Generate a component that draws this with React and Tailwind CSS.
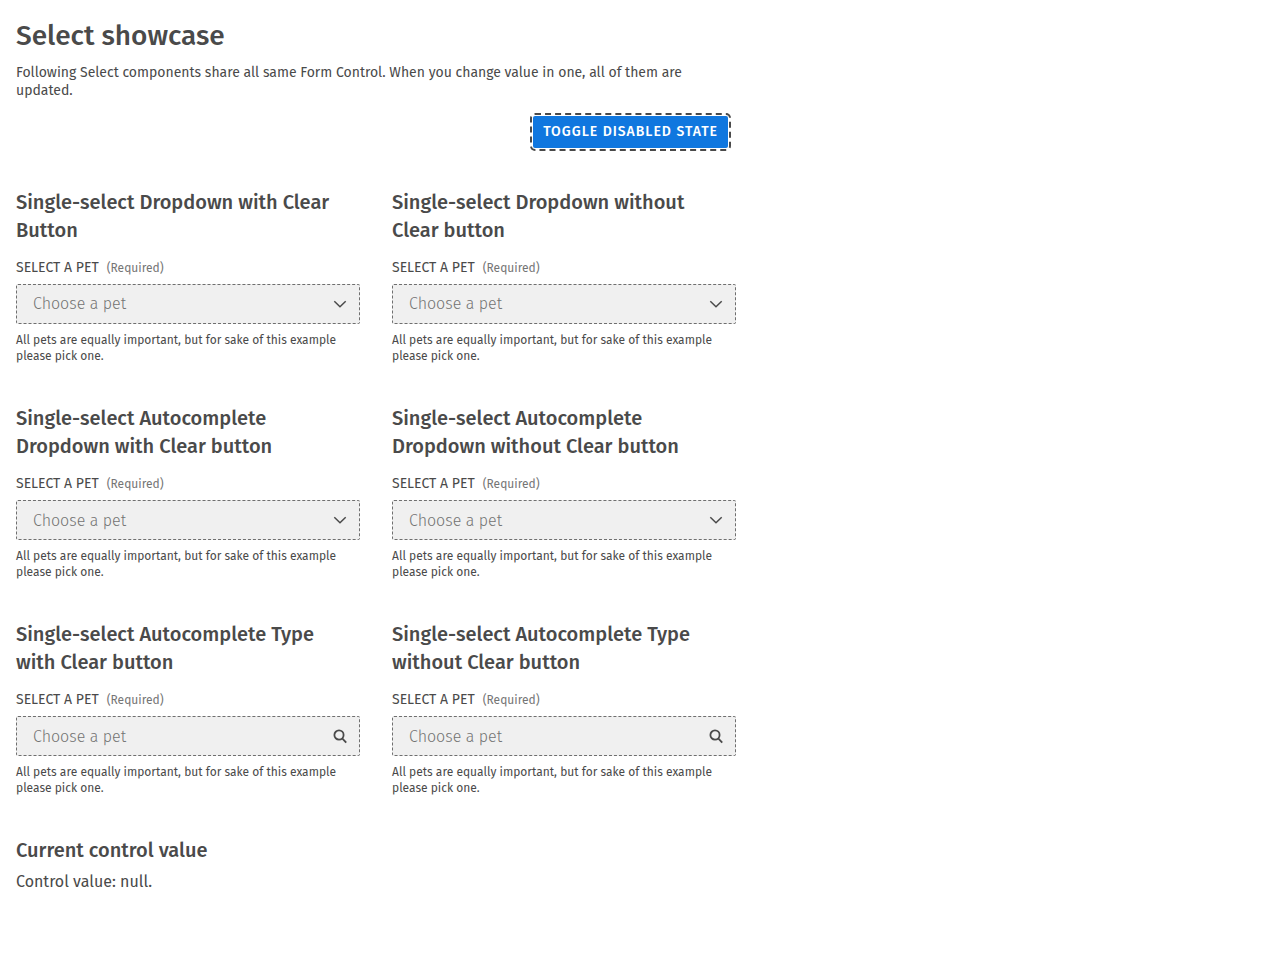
import { useId, useState } from "react";

const PETS = ["Dog", "Cat", "Hamster", "Parrot", "Spider", "Goldfish"];

const FIELDS = [
  { title: "Single-select Dropdown with Clear Button", kind: "dropdown" },
  { title: "Single-select Dropdown without Clear button", kind: "dropdown" },
  { title: "Single-select Autocomplete Dropdown with Clear button", kind: "autocomplete" },
  { title: "Single-select Autocomplete Dropdown without Clear button", kind: "autocomplete" },
  { title: "Single-select Autocomplete Type with Clear button", kind: "search" },
  { title: "Single-select Autocomplete Type without Clear button", kind: "search" },
];

const CONTROL =
  "h-10 w-full appearance-none rounded-xs border border-[#4a4a4a] bg-white pl-4 pr-10 text-base font-light text-[#4a4a4a] outline-none placeholder:text-[#737373] placeholder:opacity-100 disabled:border-dashed disabled:border-[#6f6f6f] disabled:bg-[#f0f0f0] disabled:text-[#737373] disabled:opacity-100";

function ChevronIcon() {
  return (
    <svg viewBox="0 0 16 16" className="size-4" fill="none" stroke="currentColor" strokeWidth="1.5" aria-hidden="true">
      <path d="M2.3 5.2 8 10.8l5.7-5.6" />
    </svg>
  );
}

function SearchIcon() {
  return (
    <svg viewBox="0 0 16 16" className="size-4" fill="none" stroke="currentColor" strokeWidth="1.8" aria-hidden="true">
      <circle cx="7" cy="7" r="4.6" />
      <path d="m10.2 10.4 4 4.2" />
    </svg>
  );
}

function PetField({ title, kind, value, disabled, onChange }) {
  const id = useId();
  return (
    <section>
      <h2 className="pr-3 text-xl font-medium">{title}</h2>
      <div className="mt-3 flex items-center gap-2">
        <label htmlFor={id} className="text-sm leading-6">SELECT A PET</label>
        <span className="text-xs leading-6 text-[#757575]">(Required)</span>
      </div>
      <div className="relative mt-1">
        {kind === "dropdown" ? (
          <select id={id} required disabled={disabled} value={value} onChange={onChange} className={CONTROL}>
            <option value="">Choose a pet</option>
            {PETS.map((pet) => (
              <option key={pet}>{pet}</option>
            ))}
          </select>
        ) : (
          <input
            id={id}
            type="text"
            required
            disabled={disabled}
            value={value}
            onChange={onChange}
            placeholder="Choose a pet"
            className={CONTROL}
          />
        )}
        <span className="pointer-events-none absolute inset-y-0 right-3 flex items-center">
          {kind === "search" ? <SearchIcon /> : <ChevronIcon />}
        </span>
      </div>
      <p className="mt-2 text-xs">
        All pets are equally important, but for sake of this example please pick one.
      </p>
    </section>
  );
}

export default function App() {
  const [disabled, setDisabled] = useState(true);
  const [value, setValue] = useState("");

  return (
    <main className="max-w-[752px] p-4 font-['Fira_Sans','Roboto',sans-serif] text-[#4a4a4a]">
      <h1 className="text-[28px] leading-10 font-medium">Select showcase</h1>
      <p className="mt-2 text-sm leading-[18px]">
        Following Select components share all same Form Control. When you change value in one, all of them are
        updated.
      </p>
      <div className="mt-4 flex justify-end pr-2">
        <button
          type="button"
          onClick={() => setDisabled(!disabled)}
          className="h-8 rounded-xs bg-[#1077df] px-2.5 text-sm font-medium tracking-[1px] text-white outline-2 outline-offset-1 outline-dashed outline-[#4a4a4a]"
        >
          TOGGLE DISABLED STATE
        </button>
      </div>
      <div className="mt-10 grid gap-x-8 gap-y-10 sm:grid-cols-2">
        {FIELDS.map((field) => (
          <PetField
            key={field.title}
            {...field}
            value={value}
            disabled={disabled}
            onChange={(event) => setValue(event.target.value)}
          />
        ))}
      </div>
      <section className="mt-10">
        <h2 className="text-xl font-medium">Current control value</h2>
        <p className="mt-1.5">Control value: {value || "null"}.</p>
      </section>
    </main>
  );
}
